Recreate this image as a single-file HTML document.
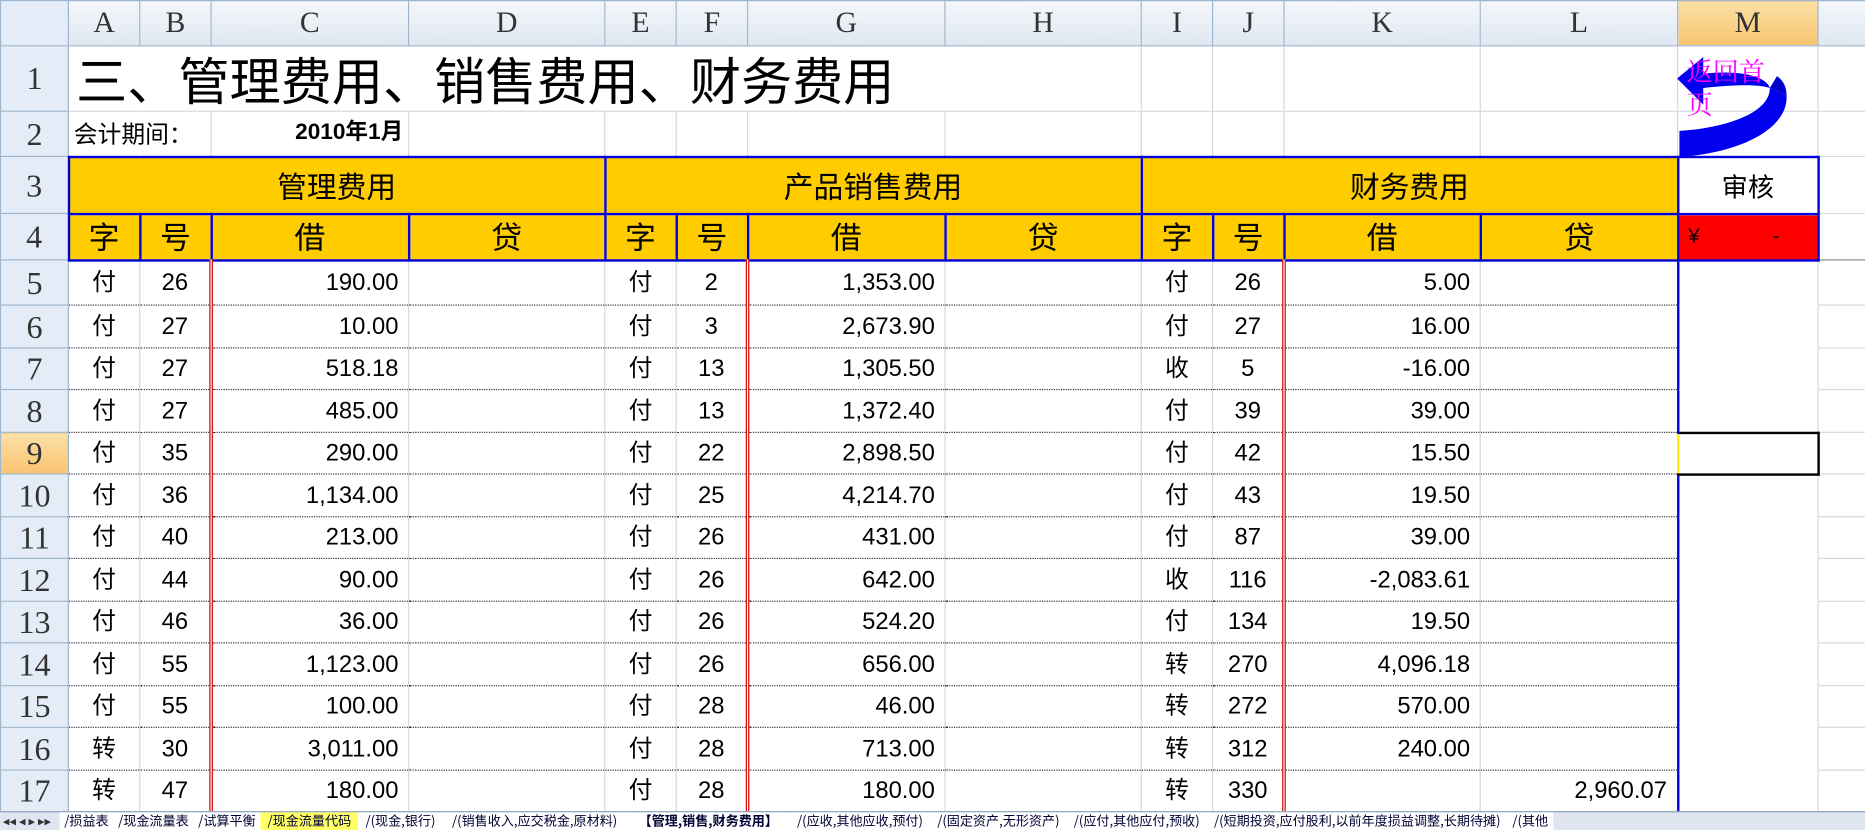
<!DOCTYPE html>
<html><head><meta charset="utf-8">
<style>
html,body{margin:0;padding:0;width:1865px;height:830px;overflow:hidden;background:#fff;}
#w{position:absolute;left:0;top:0;width:1568px;height:698px;transform:scale(1.18941);transform-origin:0 0;overflow:hidden;}
table{border-collapse:collapse;table-layout:fixed;position:absolute;left:0;top:0;width:1568px;}
td{border:1px solid #d4d8e0;padding:0;overflow:hidden;white-space:nowrap;font-family:"Liberation Sans","Noto Sans CJK SC",sans-serif;font-size:20px;color:#000;vertical-align:middle;line-height:22px;}
.ch{background:linear-gradient(#f4f7fb,#dfe7f1);text-align:center;font-family:"Liberation Serif","Noto Serif CJK SC",serif;font-size:25px;color:#333;border-color:#9eb6ce;border-bottom:1px solid #9eb6ce;}
.rh{background:#e4ecf7;text-align:center;font-family:"Liberation Serif","Noto Serif CJK SC",serif;font-size:27px;color:#333;border-color:#9eb6ce;}
.sel{background:linear-gradient(#fbe0a6,#f8c46f);}
.h3{background:#ffcc00;border:2px solid #0000dd;text-align:center;font-size:25px;font-family:"Noto Sans CJK SC",sans-serif;}
.h4{background:#ffcc00;border:2px solid #0000dd;text-align:center;font-size:26px;font-family:"Noto Sans CJK SC",sans-serif;}
.d td{border-bottom:1px dotted #333;border-top:1px dotted #333;}
.d td.rh{border-top:1px solid #9eb6ce;border-bottom:1px solid #9eb6ce;}
.d td.z{text-align:center;}
.d td.n{text-align:center;}
.d td.a{text-align:right;padding-right:8px;}
.bl{border-left:1px solid #0000cc !important;}
.rl{border-left:3px double #cc0000 !important;}
.d td.m{border-bottom:none;border-top:none;border-left:2px solid #0000dd;border-right:1px solid #d4d8e0;}
.d td.x{border-top:1px solid #d4d8e0;border-bottom:1px solid #d4d8e0;}
</style></head><body><div id="w">
<table>
<colgroup><col style="width:57px"><col style="width:60px"><col style="width:60px"><col style="width:166px"><col style="width:165px"><col style="width:60px"><col style="width:60px"><col style="width:166px"><col style="width:165px"><col style="width:60px"><col style="width:60px"><col style="width:165px"><col style="width:166px"><col style="width:118px"><col style="width:40px"></colgroup>
<tr style="height:38px"><td class="ch" style="background:#e4ecf7"></td><td class="ch">A</td><td class="ch">B</td><td class="ch">C</td><td class="ch">D</td><td class="ch">E</td><td class="ch">F</td><td class="ch">G</td><td class="ch">H</td><td class="ch">I</td><td class="ch">J</td><td class="ch">K</td><td class="ch">L</td><td class="ch sel">M</td><td class="ch"></td></tr>
<tr style="height:55px"><td class="rh">1</td><td colspan="8" style="font-size:43px;line-height:50px;font-family:'Noto Sans CJK SC',sans-serif;padding-left:6px;border-right:none">三、管理费用、销售费用、财务费用</td><td></td><td></td><td></td><td></td><td></td><td></td></tr>
<tr style="height:38px"><td class="rh">2</td><td colspan="2" style="font-size:20px;font-family:'Noto Sans CJK SC',sans-serif;padding-left:4px">会计期间：</td><td style="font-weight:bold;text-align:right;padding-right:4px;font-size:19px">2010年1月</td><td></td><td></td><td></td><td></td><td></td><td></td><td></td><td></td><td></td><td></td><td></td></tr>
<tr style="height:48px"><td class="rh">3</td><td colspan="4" class="h3">管理费用</td><td colspan="4" class="h3">产品销售费用</td><td colspan="4" class="h3">财务费用</td><td class="h3" style="background:#fff;font-size:22px">审核</td><td></td></tr>
<tr style="height:39px"><td class="rh">4</td><td class="h4">字</td><td class="h4">号</td><td class="h4">借</td><td class="h4">贷</td><td class="h4">字</td><td class="h4">号</td><td class="h4">借</td><td class="h4">贷</td><td class="h4">字</td><td class="h4">号</td><td class="h4">借</td><td class="h4">贷</td><td class="h4" style="background:#ff0000;text-align:left;font-size:17px;font-family:'Liberation Sans',sans-serif;padding-left:8px">¥&nbsp;&nbsp;&nbsp;&nbsp;&nbsp;&nbsp;&nbsp;&nbsp;&nbsp;&nbsp;&nbsp;&nbsp;&nbsp;-</td><td style="border-bottom:1px solid #888"></td></tr>
<tbody class="d">
<tr style="height:38px"><td class="rh">5</td><td class="z bl">付</td><td class="n bl">26</td><td class="a rl">190.00</td><td class="bl"></td><td class="z bl">付</td><td class="n bl">2</td><td class="a rl">1,353.00</td><td class="bl"></td><td class="z bl">付</td><td class="n bl">26</td><td class="a rl">5.00</td><td class="a bl"></td><td class="m"></td><td class="x"></td></tr>
<tr style="height:36px"><td class="rh">6</td><td class="z bl">付</td><td class="n bl">27</td><td class="a rl">10.00</td><td class="bl"></td><td class="z bl">付</td><td class="n bl">3</td><td class="a rl">2,673.90</td><td class="bl"></td><td class="z bl">付</td><td class="n bl">27</td><td class="a rl">16.00</td><td class="a bl"></td><td class="m"></td><td class="x"></td></tr>
<tr style="height:35px"><td class="rh">7</td><td class="z bl">付</td><td class="n bl">27</td><td class="a rl">518.18</td><td class="bl"></td><td class="z bl">付</td><td class="n bl">13</td><td class="a rl">1,305.50</td><td class="bl"></td><td class="z bl">收</td><td class="n bl">5</td><td class="a rl">-16.00</td><td class="a bl"></td><td class="m"></td><td class="x"></td></tr>
<tr style="height:36px"><td class="rh">8</td><td class="z bl">付</td><td class="n bl">27</td><td class="a rl">485.00</td><td class="bl"></td><td class="z bl">付</td><td class="n bl">13</td><td class="a rl">1,372.40</td><td class="bl"></td><td class="z bl">付</td><td class="n bl">39</td><td class="a rl">39.00</td><td class="a bl"></td><td class="m"></td><td class="x"></td></tr>
<tr style="height:35px"><td class="rh sel">9</td><td class="z bl">付</td><td class="n bl">35</td><td class="a rl">290.00</td><td class="bl"></td><td class="z bl">付</td><td class="n bl">22</td><td class="a rl">2,898.50</td><td class="bl"></td><td class="z bl">付</td><td class="n bl">42</td><td class="a rl">15.50</td><td class="a bl"></td><td class="m" style="border:2px solid #000;border-left:2px solid #ffee00"></td><td class="x"></td></tr>
<tr style="height:36px"><td class="rh">10</td><td class="z bl">付</td><td class="n bl">36</td><td class="a rl">1,134.00</td><td class="bl"></td><td class="z bl">付</td><td class="n bl">25</td><td class="a rl">4,214.70</td><td class="bl"></td><td class="z bl">付</td><td class="n bl">43</td><td class="a rl">19.50</td><td class="a bl"></td><td class="m"></td><td class="x"></td></tr>
<tr style="height:35px"><td class="rh">11</td><td class="z bl">付</td><td class="n bl">40</td><td class="a rl">213.00</td><td class="bl"></td><td class="z bl">付</td><td class="n bl">26</td><td class="a rl">431.00</td><td class="bl"></td><td class="z bl">付</td><td class="n bl">87</td><td class="a rl">39.00</td><td class="a bl"></td><td class="m"></td><td class="x"></td></tr>
<tr style="height:36px"><td class="rh">12</td><td class="z bl">付</td><td class="n bl">44</td><td class="a rl">90.00</td><td class="bl"></td><td class="z bl">付</td><td class="n bl">26</td><td class="a rl">642.00</td><td class="bl"></td><td class="z bl">收</td><td class="n bl">116</td><td class="a rl">-2,083.61</td><td class="a bl"></td><td class="m"></td><td class="x"></td></tr>
<tr style="height:35px"><td class="rh">13</td><td class="z bl">付</td><td class="n bl">46</td><td class="a rl">36.00</td><td class="bl"></td><td class="z bl">付</td><td class="n bl">26</td><td class="a rl">524.20</td><td class="bl"></td><td class="z bl">付</td><td class="n bl">134</td><td class="a rl">19.50</td><td class="a bl"></td><td class="m"></td><td class="x"></td></tr>
<tr style="height:36px"><td class="rh">14</td><td class="z bl">付</td><td class="n bl">55</td><td class="a rl">1,123.00</td><td class="bl"></td><td class="z bl">付</td><td class="n bl">26</td><td class="a rl">656.00</td><td class="bl"></td><td class="z bl">转</td><td class="n bl">270</td><td class="a rl">4,096.18</td><td class="a bl"></td><td class="m"></td><td class="x"></td></tr>
<tr style="height:35px"><td class="rh">15</td><td class="z bl">付</td><td class="n bl">55</td><td class="a rl">100.00</td><td class="bl"></td><td class="z bl">付</td><td class="n bl">28</td><td class="a rl">46.00</td><td class="bl"></td><td class="z bl">转</td><td class="n bl">272</td><td class="a rl">570.00</td><td class="a bl"></td><td class="m"></td><td class="x"></td></tr>
<tr style="height:36px"><td class="rh">16</td><td class="z bl">转</td><td class="n bl">30</td><td class="a rl">3,011.00</td><td class="bl"></td><td class="z bl">付</td><td class="n bl">28</td><td class="a rl">713.00</td><td class="bl"></td><td class="z bl">转</td><td class="n bl">312</td><td class="a rl">240.00</td><td class="a bl"></td><td class="m"></td><td class="x"></td></tr>
<tr style="height:35px"><td class="rh">17</td><td class="z bl">转</td><td class="n bl">47</td><td class="a rl">180.00</td><td class="bl"></td><td class="z bl">付</td><td class="n bl">28</td><td class="a rl">180.00</td><td class="bl"></td><td class="z bl">转</td><td class="n bl">330</td><td class="a rl"></td><td class="a bl">2,960.07</td><td class="m"></td><td class="x"></td></tr>
<tr style="height:35px"><td class="rh">18</td><td class="bl"></td><td class="bl"></td><td class="rl"></td><td class="bl"></td><td class="bl"></td><td class="bl"></td><td class="rl"></td><td class="bl"></td><td class="bl"></td><td class="bl"></td><td class="rl"></td><td class="bl"></td><td class="m"></td><td class="x"></td></tr>
</tbody>
</table>
<svg style="position:absolute;left:1408px;top:46px" width="100" height="90" viewBox="0 0 100 90">
<path d="M4 64 C40 62 80 50 80 28 L94 34 C96 60 60 82 4 86 Z" fill="#0000ee"/>
<path d="M80 28 C78 20 60 12 24 16 L24 2 L2 20 L24 42 L24 28 C60 24 74 26 80 28 Z" fill="#0000ee"/>
<path d="M80 28 L94 34 C94 28 92 22 86 18 Z" fill="#0000cc"/>
<text x="10" y="22" font-family="Noto Serif CJK SC,serif" font-size="22" fill="#ff00ff">返回首</text>
<text x="10" y="50" font-family="Noto Serif CJK SC,serif" font-size="22" fill="#ff00ff">页</text>
</svg>
<div style="position:absolute;left:0;top:682px;width:1568px;height:16px;background:#dfe6f0;border-top:1px solid #8ca0bc;font-family:'Noto Sans CJK SC',sans-serif;font-size:11px;line-height:15px;white-space:nowrap;color:#003">
<span style="display:inline-block;width:50px;color:#333">&nbsp;◂◂ ◂ ▸ ▸▸</span><span style="display:inline-block;background:#fff;padding:0 4px">/损益表</span><span style="display:inline-block;background:#fff;padding:0 4px">/现金流量表</span><span style="display:inline-block;background:#fff;padding:0 4px">/试算平衡</span><span style="display:inline-block;background:#ffff66;padding:0 6px">/现金流量代码</span><span style="display:inline-block;background:#fff;padding:0 6px">/(现金,银行)</span><span style="display:inline-block;background:#fff;padding:0 8px">/(销售收入,应交税金,原材料)</span><span style="display:inline-block;background:#fff;padding:0 10px;font-weight:bold">【管理,销售,财务费用】</span><span style="display:inline-block;background:#fff;padding:0 6px">/(应收,其他应收,预付)</span><span style="display:inline-block;background:#fff;padding:0 6px">/(固定资产,无形资产)</span><span style="display:inline-block;background:#fff;padding:0 6px">/(应付,其他应付,预收)</span><span style="display:inline-block;background:#fff;padding:0 6px">/(短期投资,应付股利,以前年度损益调整,长期待摊)</span><span style="display:inline-block;background:#fff;padding:0 4px">/(其他</span>
</div>
</div></body></html>
